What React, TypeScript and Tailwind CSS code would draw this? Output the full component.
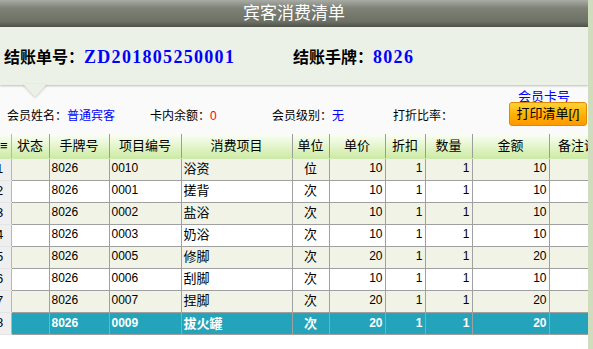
import React from 'react';

const cols = [11, 38, 60, 72, 111, 37, 56, 40, 47, 77, 70];
const heads = ['≡', '状态', '手牌号', '项目编号', '消费项目', '单位', '单价', '折扣', '数量', '金额', '备注说明'];

const rows = [
    ['1', '8026', '0010', '浴资', '位', '10', '1', '1', '10'],
    ['2', '8026', '0001', '搓背', '次', '10', '1', '1', '10'],
    ['3', '8026', '0002', '盐浴', '次', '10', '1', '1', '10'],
    ['4', '8026', '0003', '奶浴', '次', '10', '1', '1', '10'],
    ['5', '8026', '0005', '修脚', '次', '20', '1', '1', '20'],
    ['6', '8026', '0006', '刮脚', '次', '10', '1', '1', '10'],
    ['7', '8026', '0007', '捏脚', '次', '20', '1', '1', '20'],
    ['8', '8026', '0009', '拔火罐', '次', '20', '1', '1', '20'],
];

const Cell = ({ children, align, sel }: { children?: React.ReactNode; align: string; sel: boolean }) => (
    <td className="p-0 border border-[#a0a0a0] h-[22px]">
        <div className={`h-[21px] leading-[19px] px-[2px] overflow-hidden whitespace-nowrap ${align} ${sel ? 'border-y border-dotted border-[#e0604a]' : ''}`}>
            {children}
        </div>
    </td>
);

export default function App() {
    return (
        <div className="w-[593px] h-[349px] flex bg-white overflow-hidden font-['Liberation_Sans','Noto_Sans_CJK_SC',sans-serif] text-black">
            <div className="w-[588px] flex flex-col overflow-hidden">
                {/* title */}
                <div className="h-[27px] shrink-0 flex items-center justify-center text-white text-[17px] bg-[linear-gradient(#a9aca4,#7d8176_30%,#6c7065_80%,#4e5249)]">
                    宾客消费清单
                </div>

                {/* bill info */}
                <div className="relative h-[58px] shrink-0 flex items-center pl-[4px] pt-[2px] bg-[#ebf1e6] shadow-[0_1px_2px_rgba(0,0,0,0.25)] z-10">
                    <div className="w-[289px] flex items-baseline">
                        <span className="font-bold text-[16px]">结账单号：</span>
                        <span className="text-[#0000ff] text-[18px] font-bold tracking-[1.3px] font-['Liberation_Serif',serif]">ZD201805250001</span>
                    </div>
                    <div className="flex items-baseline">
                        <span className="font-bold text-[16px]">结账手牌：</span>
                        <span className="text-[#0000ff] text-[18px] font-bold tracking-[1.3px] font-['Liberation_Serif',serif]">8026</span>
                    </div>
                    <div className="absolute left-[23px] top-[57px] w-0 h-0 border-l-[12px] border-r-[12px] border-t-[13px] border-l-transparent border-r-transparent border-t-[#ebf1e6] drop-shadow-[0_1px_1px_rgba(0,0,0,0.2)]" />
                </div>

                {/* member info */}
                <div className="h-[49px] shrink-0 flex items-start bg-[#fafafa] text-[12px]">
                    <div className="flex pl-[7px] mt-[23px] leading-[16px]">
                        <div className="w-[143px]">会员姓名：<span className="text-[#0000ff]">普通宾客</span></div>
                        <div className="w-[122px]">卡内余额：<span className="text-[#ff0000]">0</span></div>
                        <div className="w-[121px]">会员级别：<span className="text-[#0000ff]">无</span></div>
                        <div>打折比率：</div>
                    </div>
                    <div className="ml-auto mr-[1px] flex flex-col items-end">
                        <span className="mt-[5px] mr-[17px] h-[14px] leading-[14px] text-[13px] text-[#0000ff]">会员卡号</span>
                        <button className="relative z-10 -mt-[2px] w-[78px] h-[24px] text-[13px] rounded-[3px] border border-[#e08a00] bg-[linear-gradient(#ffd23a,#ffb000_55%,#ff9800)] text-black">
                            打印清单[/]
                        </button>
                    </div>
                </div>

                {/* table */}
                <table className="table-fixed border-collapse w-[619px] text-[12px]">
                    <colgroup>
                        {cols.map((w, i) => <col key={i} style={{ width: w }} />)}
                    </colgroup>
                    <thead>
                        <tr className="bg-[linear-gradient(#fbfef6,#e4f5cc_50%,#cdeba4)]">
                            {heads.map((h, i) => (
                                <th key={i} className={`p-0 h-[24px] font-normal text-[13px] whitespace-nowrap overflow-hidden border-r border-[#9c9c9c] border-b border-b-[#cfe8ad] ${i === 0 ? 'text-left border-r-[#a8cf5e]' : 'text-center'}`}>
                                    {h}
                                </th>
                            ))}
                        </tr>
                    </thead>
                    <tbody>
                        {rows.map((r, ri) => {
                            const sel = ri === 7;
                            const bg = sel ? 'bg-[#23a4ba] text-white font-bold' : ri % 2 === 0 ? 'bg-[#f0f3e6]' : 'bg-white';
                            return (
                                <tr key={ri} className={bg}>
                                    <td className="p-0 h-[22px] bg-[#efefef] border-r border-r-[#a8cf5e] border-b border-b-[#e4e4e4] text-black font-normal overflow-hidden">
                                        <span className="block -ml-[4px] text-[13px]">{r[0]}</span>
                                    </td>
                                    <Cell align="" sel={sel} />
                                    <Cell align="text-left" sel={sel}>{r[1]}</Cell>
                                    <Cell align="text-left" sel={sel}>{r[2]}</Cell>
                                    <Cell align="text-left text-[13px]" sel={sel}>{r[3]}</Cell>
                                    <Cell align="text-center text-[13px]" sel={sel}>{r[4]}</Cell>
                                    <Cell align="text-right" sel={sel}>{r[5]}</Cell>
                                    <Cell align="text-right" sel={sel}>{r[6]}</Cell>
                                    <Cell align="text-right" sel={sel}>{r[7]}</Cell>
                                    <Cell align="text-right" sel={sel}>{r[8]}</Cell>
                                    <Cell align="" sel={sel} />
                                </tr>
                            );
                        })}
                    </tbody>
                </table>
            </div>
            <div className="w-[5px] shrink-0 bg-[#cfdcbd]" />
        </div>
    );
}
